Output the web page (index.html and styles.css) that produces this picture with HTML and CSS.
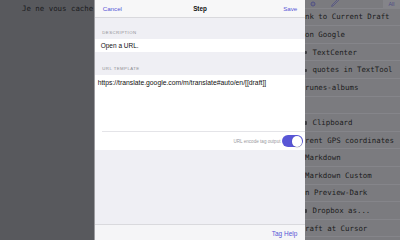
FILE: index.html
```html
<!DOCTYPE html>
<html lang="fr">
<head>
<meta charset="utf-8">
<title>Step</title>
<link rel="stylesheet" href="styles.css">
</head>
<body>
<div class="app">
  <div class="editor">
    <p class="draft">Je ne vous cache</p>
  </div>
  <div class="actions">
    <div class="act-head">
      <svg class="gear" width="6" height="6" viewBox="0 0 6 6"><circle cx="3" cy="3" r="2" fill="none" stroke="currentColor" stroke-width="1"/><circle cx="3" cy="3" r="0.6" fill="currentColor"/></svg>
      <svg class="pencil" width="8" height="8" viewBox="0 0 8 8"><path d="M6.6 0.4 L7.6 1.4 L2 7 L0.6 7.4 L1 6 Z" fill="none" stroke="currentColor" stroke-width="0.7" stroke-linejoin="round"/></svg>
      <span class="all">All</span>
    </div>
    <ul class="act-list">
      <li class="row"><span>nk to Current Draft</span></li>
      <li class="row"><span>on Google</span></li>
      <li class="row cut"><span>TextCenter</span></li>
      <li class="row cut"><span>quotes in TextTool</span></li>
      <li class="row"><span>runes-albums</span></li>
      <li class="row"><span></span></li>
      <li class="row cut"><span>Clipboard</span></li>
      <li class="row"><span>rent GPS coordinates</span></li>
      <li class="row"><span>Markdown</span></li>
      <li class="row"><span>Markdown Custom</span></li>
      <li class="row"><span>n Preview-Dark</span></li>
      <li class="row cut"><span>Dropbox as...</span></li>
      <li class="row"><span>raft at Cursor</span></li>
    </ul>
  </div>
</div>

<div class="sheet">
  <header class="nav">
    <span class="nav-btn left">Cancel</span>
    <span class="nav-title">Step</span>
    <span class="nav-btn right">Save</span>
  </header>
  <main class="sheet-body">
    <div class="sec-label first">DESCRIPTION</div>
    <div class="cell">Open a URL.</div>
    <div class="sec-label second">URL TEMPLATE</div>
    <div class="textcell">
      <div class="url">https://translate.google.com/m/translate#auto/en/[[draft]]</div>
      <div class="toggle-row">
        <span class="toggle-label">URL encode tag output</span>
        <span class="switch"><span class="knob"></span></span>
      </div>
    </div>
  </main>
  <footer class="toolbar">
    <span class="tb-btn">Tag Help</span>
  </footer>
</div>
</body>
</html>
```

FILE: styles.css
```css
html, body {
  margin: 0;
  padding: 0;
}
body {
  width: 400px;
  height: 240px;
  overflow: hidden;
  position: relative;
  font-family: "Liberation Sans", Arial, sans-serif;
}

.app {
  display: flex;
  height: 240px;
}

.editor {
  width: 305px;
  flex: none;
  background: #58595d;
  padding: 3.5px 0 0 22px;
  box-sizing: border-box;
}
.draft {
  margin: 0;
  font: 7.4px/9px "DejaVu Sans Mono", monospace;
  color: #1b1b1d;
  white-space: nowrap;
}

.actions {
  flex: 1;
  background: #7b7b7f;
  overflow: hidden;
}
.act-head {
  height: 7.6px;
  border-bottom: 1px solid #85858a;
  display: flex;
  align-items: center;
  color: #4e4e86;
}
.gear {
  margin-left: 5px;
  margin-top: 1px;
}
.pencil {
  margin-left: 15px;
  margin-top: -1px;
}
.all {
  margin-left: auto;
  width: 17px;
  height: 9px;
  background: #848489;
  font-size: 5.4px;
  line-height: 9px;
  text-align: center;
  align-self: flex-start;
  color: #4e4e86;
}

.act-list {
  list-style: none;
  margin: 0;
  padding: 0;
}
.row {
  height: 16.6px;
  border-bottom: 1px solid #85858a;
  display: flex;
  align-items: center;
  font: 7.4px/9px "DejaVu Sans Mono", monospace;
  color: #1b1b1d;
  white-space: nowrap;
}
.row.cut::before {
  content: "";
  width: 1.4px;
  height: 3.2px;
  margin: 1px 5.9px 0 0.2px;
  border-radius: 0 1px 1px 0;
  background: #2a2a2c;
  opacity: 0.75;
}

.sheet {
  position: absolute;
  left: 94px;
  top: 0;
  width: 211px;
  height: 240px;
  box-sizing: border-box;
  border-left: 1px solid #9c9ca0;
  background: #efeff4;
  display: flex;
  flex-direction: column;
}

.nav {
  height: 16.7px;
  flex: none;
  background: #f7f7f8;
  border-bottom: 1px solid #d9d9dd;
  display: grid;
  grid-template-columns: 1fr auto 1fr;
  align-items: center;
  padding: 0 7.7px;
}
.nav-btn {
  font-size: 6.2px;
  color: #5856d6;
}
.nav-btn.right {
  text-align: right;
}
.nav-title {
  font-size: 6.3px;
  font-weight: bold;
  color: #111;
}

.sheet-body {
  flex: 1;
  display: flex;
  flex-direction: column;
}
.sec-label {
  font-size: 4.3px;
  line-height: 5px;
  letter-spacing: 0.45px;
  color: #8e8e93;
  padding: 0 7.3px;
}
.sec-label.first {
  padding-top: 12px;
  padding-bottom: 4.3px;
}
.sec-label.second {
  padding-top: 14.2px;
  padding-bottom: 3.8px;
}
.cell {
  height: 13px;
  background: #fff;
  font-size: 6.5px;
  line-height: 13px;
  padding-left: 5.7px;
  color: #111;
}
.textcell {
  height: 75px;
  background: #fff;
  display: flex;
  flex-direction: column;
}
.url {
  flex: 1;
  padding: 3.7px 0 0 2.7px;
  font-size: 6.8px;
  line-height: 8px;
  color: #111;
  white-space: nowrap;
}
.toggle-row {
  height: 17px;
  margin-left: 7px;
  border-top: 1px solid #e4e4e8;
  display: flex;
  align-items: center;
  justify-content: flex-end;
  gap: 1.5px;
  padding-right: 2px;
  padding-top: 1px;
}
.toggle-label {
  font-size: 4.6px;
  color: #9a9aa0;
}
.switch {
  width: 21px;
  height: 12px;
  border-radius: 6px;
  background: #5856d6;
  display: flex;
  align-items: center;
  justify-content: flex-end;
  padding: 0 0.6px;
  box-sizing: border-box;
}
.knob {
  width: 10.8px;
  height: 10.8px;
  border-radius: 50%;
  background: #fff;
  box-shadow: 0 0.4px 1px rgba(0, 0, 0, 0.3);
}

.toolbar {
  height: 16px;
  flex: none;
  box-sizing: border-box;
  background: #f5f5f7;
  border-top: 1px solid #d9d9dd;
  display: flex;
  align-items: center;
  justify-content: flex-end;
  padding: 1px 7.7px 0 0;
}
.tb-btn {
  font-size: 6.5px;
  color: #5856d6;
}
```
